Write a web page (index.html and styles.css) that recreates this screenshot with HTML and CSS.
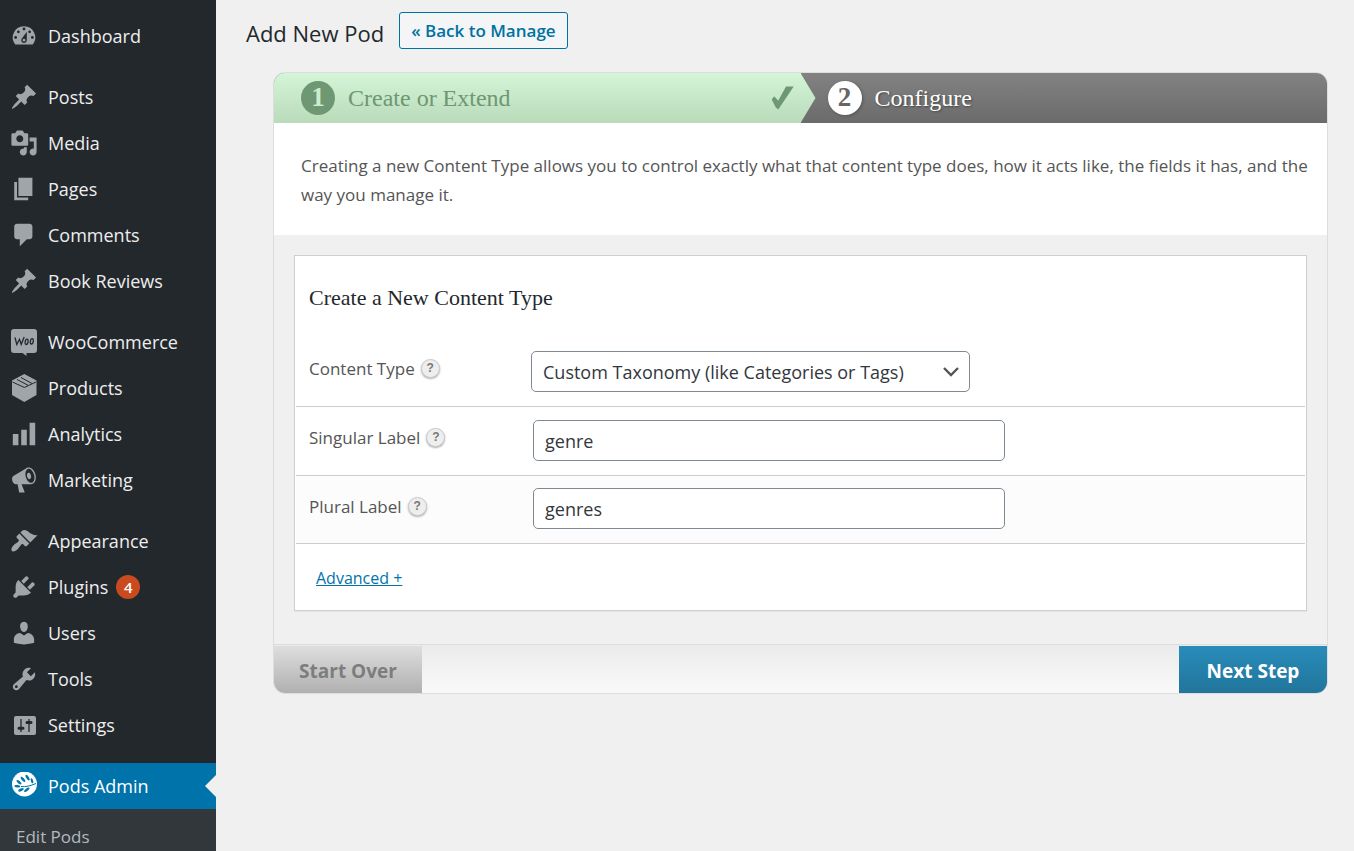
FILE: index.html
```html
<!DOCTYPE html>
<html lang="en">
<head>
  <meta charset="UTF-8">
  <meta name="viewport" content="width=device-width, initial-scale=1.0">
  <title>Add New Pod</title>
  <link rel="stylesheet" href="styles.css">
</head>
<body>
  <svg class="sprite" aria-hidden="true">
    <symbol id="icon-pin" viewBox="0 0 20 20"><path d="M10.44 3.02l1.82-1.82 6.36 6.35-1.83 1.82c-1.05-.68-2.48-.57-3.41.36l-.75.75c-.92.93-1.04 2.35-.35 3.41l-1.83 1.82-2.41-2.41-2.8 2.79c-.42.42-3.38 2.71-3.8 2.29s1.86-3.39 2.28-3.81l2.79-2.79L4.1 9.36l1.83-1.82c1.05.69 2.48.57 3.4-.36l.75-.75c.93-.92 1.05-2.35.36-3.41z"/></symbol>
  </svg>

  <nav class="sidebar">
    <ul class="menu">
      <li><a href="#"><svg viewBox="0 0 20 20"><path d="M3.76 16h12.48A7.998 7.998 0 0 0 10 3a7.998 7.998 0 0 0-6.24 13zM10 4c.55 0 1 .45 1 1s-.45 1-1 1-1-.45-1-1 .45-1 1-1zM6 6c.55 0 1 .45 1 1s-.45 1-1 1-1-.45-1-1 .45-1 1-1zm8 0c.55 0 1 .45 1 1s-.45 1-1 1-1-.45-1-1 .45-1 1-1zm-5.37 5.55L12 7v6c0 1.1-.9 2-2 2s-2-.9-2-2c0-.57.24-1.08.63-1.45zM4 10c.55 0 1 .45 1 1s-.45 1-1 1-1-.45-1-1 .45-1 1-1zm12 0c.55 0 1 .45 1 1s-.45 1-1 1-1-.45-1-1 .45-1 1-1zm-5 3c0-.55-.45-1-1-1s-1 .45-1 1 .45 1 1 1 1-.45 1-1z"/></svg>Dashboard</a></li>
    </ul>
    <ul class="menu">
      <li><a href="#"><svg><use href="#icon-pin"/></svg>Posts</a></li>
      <li><a href="#"><svg viewBox="0 0 20 20"><path d="M13 11V4c0-.55-.45-1-1-1h-1.67L9 1H5L3.67 3H2c-.55 0-1 .45-1 1v7c0 .55.45 1 1 1h10c.55 0 1-.45 1-1zM7 4.5c1.38 0 2.5 1.12 2.5 2.5S8.38 9.5 7 9.5 4.5 8.38 4.5 7 5.62 4.5 7 4.5zM14 6h5v10.5c0 1.38-1.12 2.5-2.5 2.5S14 17.88 14 16.5s1.12-2.5 2.5-2.5c.17 0 .34.02.5.05V9h-3V6zm-4 8.05V13h2v3.5c0 1.38-1.12 2.5-2.5 2.5S7 17.88 7 16.5 8.12 14 9.5 14c.17 0 .34.02.5.05z"/></svg>Media</a></li>
      <li><a href="#"><svg viewBox="0 0 20 20"><path d="M6 15V2h10v13H6zm-1 1h8v2H3V5h2v11z"/></svg>Pages</a></li>
      <li><a href="#"><svg viewBox="0 0 20 20"><path d="M5 2h9c1.1 0 2 .9 2 2v7c0 1.1-.9 2-2 2h-2l-5 5v-5H5c-1.1 0-2-.9-2-2V4c0-1.1.9-2 2-2z"/></svg>Comments</a></li>
      <li><a href="#"><svg><use href="#icon-pin"/></svg>Book Reviews</a></li>
    </ul>
    <ul class="menu">
      <li><a href="#"><svg viewBox="0 0 28 28"><path d="M4 1h20a3 3 0 0 1 3 3v18a3 3 0 0 1-3 3h-7.500v3l-4-3H4a3 3 0 0 1-3-3V4a3 3 0 0 1 3-3z"/><path class="cut" d="M5 9.500l1.800 7 2.700-5.200 1.700 5 3-7.300M17 11.200c-1.800 0-2.800 5.300-.8 5.300 1.900 0 2.800-5.300.8-5.300zM22.200 10.700c-1.900 0-2.800 5.300-.8 5.300 1.900 0 2.800-5.300.8-5.300z"/></svg>WooCommerce</a></li>
      <li><a href="#"><svg viewBox="0 0 28 28"><path d="M14.300 0l12.200 6.500v14.500L14.300 28 2 21V6.500z"/><path class="cut thin" d="M2.500 8l11.800 5.500L26 8M7 5.500l11.500 6M11 3.500l11 6"/></svg>Products</a></li>
      <li><a href="#"><svg viewBox="0 0 20 20"><path d="M18 18V2h-4v16h4zm-6 0V7H8v11h4zm-6 0v-8H2v8h4z"/></svg>Analytics</a></li>
      <li><a href="#"><svg viewBox="0 0 20 20"><path d="M18.150 5.940c.46 1.620.38 3.220-.02 4.480-.42 1.280-1.260 2.180-2.300 2.480-.16.060-.26.060-.4.060-.06.020-.12.020-.18.020-.06.020-.14.020-.22.020h-6.800l2.220 5.500c.02.140-.06.260-.14.340-.08.100-.24.160-.34.160H6.950c-.1 0-.26-.06-.34-.16-.08-.08-.16-.2-.14-.34l-1-5.500H4.250l-.02-.02c-.5.060-1.080-.18-1.540-.62s-.88-1.080-1.060-1.880c-.24-.8-.2-1.560-.02-2.200.18-.62.58-1.080 1.060-1.300l.02-.02 9-5.400c.1-.06.18-.1.240-.16.060-.04.14-.08.240-.12.160-.08.280-.12.500-.18 1.040-.3 2.240.1 3.220.98s1.840 2.240 2.260 3.860zm-2.580 5.980h-.02c.4-.1.740-.34 1.040-.7.580-.7.860-1.760.86-3.040 0-.64-.1-1.300-.28-1.980-.34-1.360-1.020-2.500-1.780-3.240s-1.680-1.100-2.460-.88c-.82.220-1.400.96-1.700 2-.32 1.040-.28 2.360.06 3.720.38 1.360 1 2.500 1.800 3.240.78.740 1.620 1.100 2.480.88zm-2.540-7.080c.22-.04.42-.02.62.04.38.160.76.48 1.020 1s.42 1.200.42 1.780c0 .3-.04.56-.12.800-.18.480-.44.840-.86.940-.34.100-.8-.06-1.140-.4s-.64-.86-.78-1.500c-.18-.62-.12-1.240.02-1.720s.48-.84.820-.94z"/></svg>Marketing</a></li>
    </ul>
    <ul class="menu">
      <li><a href="#"><svg viewBox="0 0 20 20"><path d="M14.480 11.060L7.410 3.990l1.500-1.500c.5-.56 2.300-.47 3.510.32 1.210.8 1.430 1.280 2.910 2.100 1.180.64 2.450 1.260 4.450.85zm-.71.710L6.700 4.700 4.930 6.470c-.39.390-.39 1.020 0 1.410l1.060 1.060c.39.390.39 1.030 0 1.420-.6.600-1.430 1.110-2.210 1.690-.35.260-.7.530-1.010.84C1.430 14.230.4 16.080 1.400 17.070c.99 1 2.840-.03 4.180-1.360.31-.31.580-.66.850-1.020.57-.78 1.080-1.610 1.690-2.210.39-.39 1.020-.39 1.410 0l1.060 1.060c.39.390 1.020.390 1.410 0z"/></svg>Appearance</a></li>
      <li><a href="#"><svg viewBox="0 0 20 20"><path d="M13.110 4.360L9.870 7.600 8 5.730l3.240-3.240c.35-.34 1.050-.2 1.560.32.520.51.660 1.210.31 1.550zm-8 1.770l.91-1.120 9.010 9.010-1.190.84c-.71.710-2.630 1.160-3.820 1.160H6.140L4.900 17.260c-.59.590-1.540.590-2.120 0-.59-.58-.59-1.530 0-2.120l1.240-1.240v-3.880c0-1.130.4-3.190 1.090-3.890zm7.260 3.970l3.240-3.240c.34-.35 1.040-.21 1.550.31.520.51.660 1.210.31 1.550l-3.240 3.250z"/></svg>Plugins <span class="count">4</span></a></li>
      <li><a href="#"><svg viewBox="0 0 20 20"><path d="M10 9.250c-2.270 0-2.730-3.440-2.730-3.440C7 4.020 7.820 2 9.970 2c2.160 0 2.980 2.020 2.710 3.810 0 0-.41 3.440-2.680 3.440zm0 2.570L12.720 10c2.390 0 4.520 2.330 4.520 4.530v2.490s-3.650 1.130-7.240 1.130c-3.650 0-7.240-1.130-7.240-1.130v-2.490c0-2.250 1.940-4.480 4.470-4.480z"/></svg>Users</a></li>
      <li><a href="#"><svg viewBox="0 0 20 20"><path d="M16.680 9.770c-1.340 1.340-3.300 1.670-4.950.99l-5.410 6.520c-.99.990-2.590.990-3.580 0s-.99-2.590 0-3.570l6.520-5.420c-.68-1.650-.35-3.610.99-4.950 1.280-1.280 3.120-1.620 4.720-1.060l-2.890 2.890 2.820 2.820 2.860-2.870c.53 1.580.18 3.390-1.080 4.650zM3.810 16.210c.4.390 1.040.390 1.430 0 .4-.4.4-1.040 0-1.430-.39-.4-1.030-.4-1.430 0-.39.390-.39 1.030 0 1.430z"/></svg>Tools</a></li>
      <li><a href="#"><svg viewBox="0 0 28 28"><rect x="4" y="5" width="22" height="19" rx="2"/><path class="cut" d="M11 8v13M8.500 17.200h5M19 8v13M16.500 11.600h5"/><path class="cut knob" d="M9 17.200h4M17 11.600h4"/></svg>Settings</a></li>
    </ul>
    <ul class="menu">
      <li class="current"><a href="#"><svg viewBox="0 0 28 28"><circle cx="14.500" cy="12" r="12.500"/><path class="stem" d="M11 14.500c5 .5 9-.5 15-3"/><g class="leaf"><ellipse cx="9" cy="10.200" rx="3" ry="1.300" transform="rotate(38 9 10.200)"/><ellipse cx="13" cy="7.300" rx="3.200" ry="1.300" transform="rotate(50 13 7.300)"/><ellipse cx="17.600" cy="5.600" rx="3.200" ry="1.300" transform="rotate(58 17.600 5.600)"/><ellipse cx="7.300" cy="14.200" rx="3" ry="1.200" transform="rotate(5 7.300 14.200)"/><ellipse cx="11" cy="17.800" rx="3" ry="1.300" transform="rotate(-25 11 17.800)"/><ellipse cx="16.800" cy="17.800" rx="3.200" ry="1.300" transform="rotate(-38 16.800 17.800)"/><ellipse cx="22" cy="8.800" rx="2.600" ry="1.100" transform="rotate(72 22 8.800)"/></g></svg>Pods Admin</a></li>
    </ul>
    <ul class="submenu">
      <li><a href="#">Edit Pods</a></li>
    </ul>
  </nav>

  <main class="content">
    <header class="page-header">
      <h1>Add New Pod</h1>
      <a class="page-action" href="#">« Back to Manage</a>
    </header>

    <form class="wizard">
      <ol class="steps">
        <li class="step done">
          <span class="step-number">1</span>Create or Extend
          <svg class="tick" viewBox="0 0 24 24"><path d="M.7 13.500l2.500-3.300 4 4.600L15 .5h7.700L7.300 23.500l-2.500-2z"/></svg>
        </li>
        <li class="step active"><span class="step-number">2</span>Configure</li>
      </ol>

      <p class="intro">Creating a new Content Type allows you to control exactly what that content type does, how it acts like, the fields it has, and the way you manage it.</p>

      <div class="wizard-body">
        <section class="box">
          <h2>Create a New Content Type</h2>
          <div class="field">
            <div class="field-label"><label for="content-type">Content Type</label><button type="button" class="help" aria-label="Help">?</button></div>
            <div class="select-wrap">
              <select id="content-type">
                <option>Custom Taxonomy (like Categories or Tags)</option>
                <option>Custom Post Type (like Posts or Pages)</option>
              </select>
              <svg viewBox="0 0 16 10"><path d="M1 1l7 7 7-7"/></svg>
            </div>
          </div>
          <div class="field">
            <div class="field-label"><label for="singular">Singular Label</label><button type="button" class="help" aria-label="Help">?</button></div>
            <input type="text" id="singular" value="genre">
          </div>
          <div class="field alt">
            <div class="field-label"><label for="plural">Plural Label</label><button type="button" class="help" aria-label="Help">?</button></div>
            <input type="text" id="plural" value="genres">
          </div>
          <p class="advanced"><a href="#">Advanced +</a></p>
        </section>
      </div>

      <footer class="wizard-footer">
        <button type="reset" class="start-over">Start Over</button>
        <button type="submit" class="next-step">Next Step</button>
      </footer>
    </form>
  </main>
</body>
</html>
```
FILE: styles.css
```css
* {
  box-sizing: border-box;
}
body {
  display: flex;
  min-height: 100vh;
  margin: 0;
  background: #f0f0f0;
  color: #23282d;
  font-family: "Segoe UI", "Open Sans", "Noto Sans", sans-serif;
  font-size: 17px;
}
.sprite {
  position: absolute;
  width: 0;
  height: 0;
}

/* Sidebar */
.sidebar {
  display: flex;
  flex-direction: column;
  flex: 0 0 216px;
  padding-top: 13px;
  background: #23282d;
}
.menu,
.submenu,
.steps {
  margin: 0;
  padding: 0;
  list-style: none;
}
.menu + .menu {
  margin-top: 15px;
}
.menu a {
  display: flex;
  align-items: center;
  height: 46px;
  padding-left: 10px;
  color: #eee;
  font-size: 18px;
  text-decoration: none;
}
.menu svg {
  width: 28px;
  height: 28px;
  margin-right: 10px;
  fill: #a0a5aa;
}
.menu .cut {
  fill: none;
  stroke: #23282d;
  stroke-width: 1.3;
}
.menu .thin {
  stroke-width: 1;
}
.menu .knob {
  stroke-width: 3;
  stroke-linecap: round;
}
.count {
  width: 24px;
  height: 24px;
  margin-left: 8px;
  border-radius: 12px;
  background: #ca4a1f;
  color: #fff;
  font-size: 15px;
  font-weight: 600;
  line-height: 24px;
  text-align: center;
}
.current {
  position: relative;
  background: #0073aa;
}
.current::after {
  position: absolute;
  top: 12px;
  right: 0;
  border: 11px solid transparent;
  border-right-color: #f0f0f0;
  border-left: 0;
  content: "";
}
.menu .current a {
  color: #fff;
}
.menu .current svg {
  fill: #fff;
}
.current .leaf {
  fill: #0073aa;
}
.current .stem {
  fill: none;
  stroke: #0073aa;
}
.submenu {
  flex: 1;
  padding: 14px 16px 0;
  background: #32373c;
}
.submenu a {
  color: #b4b9be;
  line-height: 28px;
  text-decoration: none;
}

/* Page header */
.content {
  flex: 1;
  padding: 12px 26px 0 30px;
}
.page-header {
  display: flex;
  align-items: center;
  gap: 15px;
  margin-bottom: 23px;
}
h1 {
  margin: 5px 0 0;
  font-size: 22px;
  font-weight: 500;
  line-height: 32px;
}
.page-action {
  padding: 1px 11px 0;
  border: 1px solid #0071a1;
  border-radius: 3px;
  background: #f3f5f6;
  color: #0071a1;
  font-size: 17px;
  font-weight: 600;
  line-height: 34px;
  text-decoration: none;
}

/* Wizard */
.wizard {
  margin-left: 27px;
  overflow: hidden;
  border: 1px solid #ddd;
  border-radius: 12px;
}
.steps {
  display: flex;
  background: linear-gradient(#828282, #6b6b6b);
}
.step {
  display: flex;
  flex: 1;
  align-items: center;
  height: 50px;
  padding-left: 27px;
  font-family: "Liberation Serif", "Times New Roman", serif;
  font-size: 24px;
}
.step-number {
  width: 34px;
  height: 34px;
  margin-right: 13px;
  border-radius: 17px;
  font-size: 27px;
  font-weight: bold;
  line-height: 33px;
  text-align: center;
}
.done {
  position: relative;
  background: linear-gradient(#d4f5d7, #b9dbba);
  color: #6e9773;
}
.done::after {
  position: absolute;
  top: 0;
  left: 100%;
  width: 15px;
  height: 50px;
  background: linear-gradient(#d4f5d7, #b9dbba);
  clip-path: polygon(0 0, 100% 50%, 0 100%);
  content: "";
}
.done .step-number {
  background: #6e9773;
  color: #cbeccd;
}
.tick {
  width: 24px;
  height: 24px;
  margin-right: 6px;
  margin-left: auto;
  fill: #6e9773;
}
.active {
  color: #fff;
  text-shadow: 1px 1px 2px #444;
}
.active .step-number {
  background: #fff;
  box-shadow: 1px 1px 3px #555;
  color: #666;
  text-shadow: none;
}
.intro {
  margin: 0;
  padding: 28px 12px 26px 27px;
  background: #fff;
  color: #555;
  line-height: 29px;
}
.wizard-body {
  padding: 20px 20px 33px;
}
.box {
  padding: 1px;
  border: 1px solid #ccd0d4;
  background: #fff;
  box-shadow: 0 1px 1px #e5e5e5;
}
h2 {
  margin: 0;
  padding: 25px 13px;
  font-family: Georgia, "Liberation Serif", serif;
  font-size: 22px;
  font-weight: 400;
  line-height: 31px;
}
.field {
  display: flex;
  align-items: center;
  height: 69px;
  padding: 0 0 2px 13px;
  border-bottom: 1px solid #ccc;
}
.alt {
  height: 68px;
  background: #fcfcfc;
}
.field-label {
  display: flex;
  align-items: center;
  flex: 0 0 224px;
  padding-bottom: 5px;
  color: #555;
}
.help {
  width: 19px;
  height: 19px;
  margin-left: 6px;
  padding: 0;
  border: 1px solid #ccc;
  border-radius: 10px;
  background: #eee;
  box-shadow: 0 1px 2px #aaa;
  color: #777;
  font-family: "Liberation Sans", Arial, sans-serif;
  font-size: 12px;
  font-weight: bold;
  line-height: 17px;
}
input,
select {
  height: 41px;
  padding: 1px 11px 0;
  border: 1px solid #7e8993;
  border-radius: 5px;
  background: #fff;
  color: #32373c;
  font: inherit;
  font-size: 18px;
}
input {
  width: 472px;
}
.select-wrap {
  position: relative;
  margin-left: -2px;
}
select {
  width: 439px;
  appearance: none;
}
.select-wrap svg {
  position: absolute;
  top: 16px;
  right: 11px;
  width: 16px;
  height: 10px;
  fill: none;
  stroke: #555;
  stroke-width: 2.4;
  pointer-events: none;
}
.advanced {
  margin: 0;
  padding: 20px 20px 17px;
  font-size: 16px;
  line-height: 28px;
}
.advanced a {
  color: #0073aa;
}
.wizard-footer {
  display: flex;
  justify-content: space-between;
  padding-top: 1px;
  border-top: 1px solid #ddd;
  background: linear-gradient(#ebebeb, #f9f9f9);
}
.wizard-footer button {
  width: 148px;
  height: 47px;
  padding-top: 3px;
  border: 0;
  font: bold 19px "Segoe UI", "Open Sans", "Noto Sans", sans-serif;
}
.start-over {
  background: linear-gradient(#dedede, #b0b0b0);
  color: #7d7d7d;
}
.next-step {
  background: linear-gradient(#298cba, #21759b);
  color: #fff;
}
```
